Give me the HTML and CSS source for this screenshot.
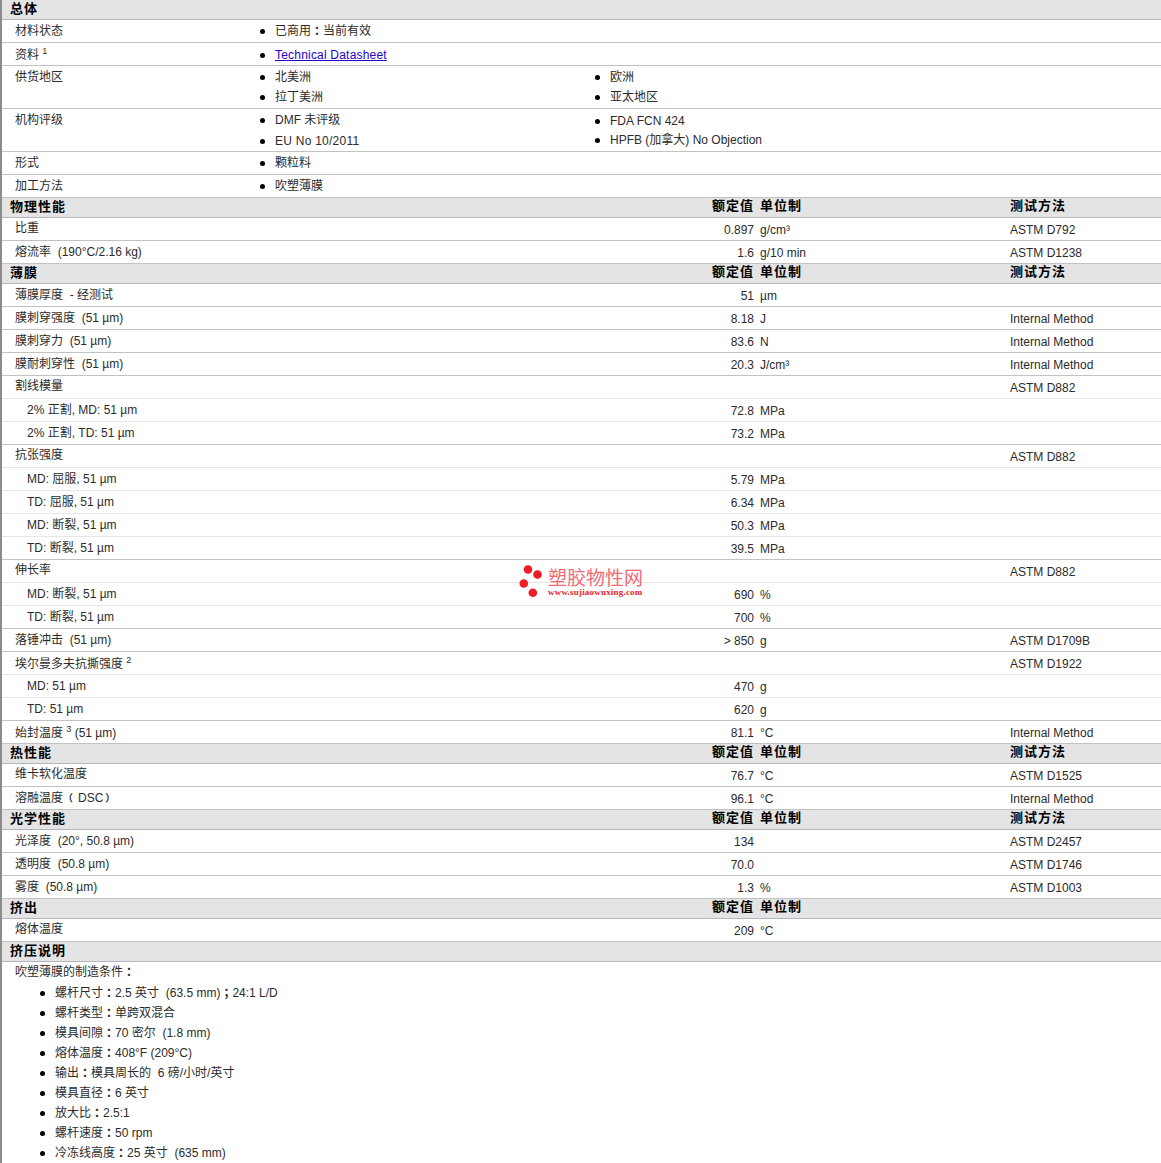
FILE: index.html
```html
<!DOCTYPE html>
<html lang="zh">
<head>
<meta charset="utf-8">
<title>塑胶物性表</title>
<link rel="stylesheet" href="styles.css">
</head>
<body>
<main class="sheet">
  <div class="head"><b class="title">总体</b></div>
  <div class="gen"><div>材料状态</div><ul class="list"><li>已商用<span class="p">：</span>当前有效</li></ul></div>
  <div class="gen"><div class="low">资料 <sup>1</sup></div><ul class="list"><li class="low"><a href="#">Technical Datasheet</a></li></ul></div>
  <div class="gen"><div>供货地区</div><ul class="list"><li>北美洲</li><li>拉丁美洲</li></ul><ul class="list"><li>欧洲</li><li>亚太地区</li></ul></div>
  <div class="gen"><div>机构评级</div><ul class="list"><li>DMF 未评级</li><li class="low wide">EU No 10/2011</li></ul><ul class="list"><li class="low">FDA FCN 424</li><li>HPFB (加拿大) No Objection</li></ul></div>
  <div class="gen"><div>形式</div><ul class="list"><li>颗粒料</li></ul></div>
  <div class="gen"><div>加工方法</div><ul class="list"><li>吹塑薄膜</li></ul></div>

  <div class="head cols"><b class="title">物理性能</b><b class="val">额定值</b><b class="unit">单位制</b><b>测试方法</b></div>
  <div class="row"><div class="cj">比重</div><div class="val">0.897</div><div class="unit">g/cm³</div><div>ASTM D792</div></div>
  <div class="row"><div>熔流率&nbsp;&nbsp;(190°C/2.16 kg)</div><div class="val">1.6</div><div class="unit">g/10 min</div><div>ASTM D1238</div></div>

  <div class="head cols"><b class="title">薄膜</b><b class="val">额定值</b><b class="unit">单位制</b><b>测试方法</b></div>
  <div class="row"><div>薄膜厚度&nbsp;&nbsp;- 经测试</div><div class="val">51</div><div class="unit">µm</div><div></div></div>
  <div class="row"><div>膜刺穿强度&nbsp;&nbsp;(51 µm)</div><div class="val">8.18</div><div class="unit">J</div><div>Internal Method</div></div>
  <div class="row"><div>膜刺穿力&nbsp;&nbsp;(51 µm)</div><div class="val">83.6</div><div class="unit">N</div><div>Internal Method</div></div>
  <div class="row"><div>膜耐刺穿性&nbsp;&nbsp;(51 µm)</div><div class="val">20.3</div><div class="unit">J/cm³</div><div>Internal Method</div></div>
  <div class="row soft"><div class="cj">割线模量</div><div class="val"></div><div class="unit"></div><div>ASTM D882</div></div>
  <div class="row soft"><div class="sub">2% 正割, MD: 51 µm</div><div class="val">72.8</div><div class="unit">MPa</div><div></div></div>
  <div class="row"><div class="sub">2% 正割, TD: 51 µm</div><div class="val">73.2</div><div class="unit">MPa</div><div></div></div>
  <div class="row soft"><div class="cj">抗张强度</div><div class="val"></div><div class="unit"></div><div>ASTM D882</div></div>
  <div class="row soft"><div class="sub">MD: 屈服, 51 µm</div><div class="val">5.79</div><div class="unit">MPa</div><div></div></div>
  <div class="row soft"><div class="sub">TD: 屈服, 51 µm</div><div class="val">6.34</div><div class="unit">MPa</div><div></div></div>
  <div class="row soft"><div class="sub">MD: 断裂, 51 µm</div><div class="val">50.3</div><div class="unit">MPa</div><div></div></div>
  <div class="row"><div class="sub">TD: 断裂, 51 µm</div><div class="val">39.5</div><div class="unit">MPa</div><div></div></div>
  <div class="row soft"><div class="cj">伸长率</div><div class="val"></div><div class="unit"></div><div>ASTM D882</div></div>
  <div class="row soft"><div class="sub">MD: 断裂, 51 µm</div><div class="val">690</div><div class="unit">%</div><div></div></div>
  <div class="row"><div class="sub">TD: 断裂, 51 µm</div><div class="val">700</div><div class="unit">%</div><div></div></div>
  <div class="row"><div>落锤冲击&nbsp;&nbsp;(51 µm)</div><div class="val">&gt; 850</div><div class="unit">g</div><div>ASTM D1709B</div></div>
  <div class="row soft"><div class="low">埃尔曼多夫抗撕强度 <sup>2</sup></div><div class="val"></div><div class="unit"></div><div>ASTM D1922</div></div>
  <div class="row soft"><div class="sub">MD: 51 µm</div><div class="val">470</div><div class="unit">g</div><div></div></div>
  <div class="row"><div class="sub">TD: 51 µm</div><div class="val">620</div><div class="unit">g</div><div></div></div>
  <div class="row"><div class="low">始封温度 <sup>3</sup> (51 µm)</div><div class="val">81.1</div><div class="unit">°C</div><div>Internal Method</div></div>

  <div class="head cols"><b class="title">热性能</b><b class="val">额定值</b><b class="unit">单位制</b><b>测试方法</b></div>
  <div class="row"><div class="cj">维卡软化温度</div><div class="val">76.7</div><div class="unit">°C</div><div>ASTM D1525</div></div>
  <div class="row"><div>溶融温度<span class="br open">（</span>DSC<span class="br close">）</span></div><div class="val">96.1</div><div class="unit">°C</div><div>Internal Method</div></div>

  <div class="head cols"><b class="title">光学性能</b><b class="val">额定值</b><b class="unit">单位制</b><b>测试方法</b></div>
  <div class="row"><div>光泽度&nbsp;&nbsp;(20°, 50.8 µm)</div><div class="val">134</div><div class="unit"></div><div>ASTM D2457</div></div>
  <div class="row"><div>透明度&nbsp;&nbsp;(50.8 µm)</div><div class="val">70.0</div><div class="unit"></div><div>ASTM D1746</div></div>
  <div class="row"><div>雾度&nbsp;&nbsp;(50.8 µm)</div><div class="val">1.3</div><div class="unit">%</div><div>ASTM D1003</div></div>

  <div class="head cols"><b class="title">挤出</b><b class="val">额定值</b><b class="unit">单位制</b><b></b></div>
  <div class="row"><div class="cj">熔体温度</div><div class="val">209</div><div class="unit">°C</div><div></div></div>

  <div class="head"><b class="title">挤压说明</b></div>
  <section class="notes">
    <p class="lead">吹塑薄膜的制造条件<span class="p">：</span></p>
    <ul class="list notelist">
      <li>螺杆尺寸<span class="p">：</span>2.5 英寸&nbsp;&nbsp;(63.5 mm)<span class="p">；</span>24:1 L/D</li>
      <li>螺杆类型<span class="p">：</span>单跨双混合</li>
      <li>模具间隙<span class="p">：</span>70 密尔&nbsp;&nbsp;(1.8 mm)</li>
      <li>熔体温度<span class="p">：</span>408°F (209°C)</li>
      <li>输出<span class="p">：</span>模具周长的&nbsp;&nbsp;6 磅/小时/英寸</li>
      <li>模具直径<span class="p">：</span>6 英寸</li>
      <li>放大比<span class="p">：</span>2.5:1</li>
      <li>螺杆速度<span class="p">：</span>50 rpm</li>
      <li>冷冻线高度<span class="p">：</span>25 英寸&nbsp;&nbsp;(635 mm)</li>
    </ul>
  </section>
</main>
<aside class="mark">
  <svg class="dots" width="28" height="36" viewBox="0 0 28 36" aria-hidden="true">
    <circle cx="9" cy="5.500" r="4.300"/><circle cx="18.500" cy="10.500" r="4.300"/><circle cx="4.800" cy="19.500" r="4.300"/><circle cx="13.800" cy="28.700" r="4.300"/>
  </svg>
  <div class="brand"><div class="cn">塑胶物性网</div><div class="url">www.sujiaowuxing.com</div></div>
</aside>
</body>
</html>
```
FILE: styles.css
```css
html, body { margin: 0; padding: 0; background: #fff; }
body {
  font: 12px/20px "Liberation Sans", "Noto Sans CJK SC", sans-serif;
  color: #2b2b2b;
  height: 1163px;
  overflow: hidden;
  position: relative;
}
.sheet { border-left: 2px solid #8c8c8c; }
.p {
  font-weight: 700;
  line-height: 0;
  display: inline-block;
  padding-left: 3px;
  letter-spacing: -3px;
}
.br { font-size: 10px; font-weight: 700; line-height: 0; }
.br.open { padding-right: 5px; }
.br.close { padding-left: 2px; }
.head {
  height: 19px;
  line-height: 18px;
  background: #e4e4e4;
  border-bottom: 1px solid #b4b4bc;
  color: #000;
}
.head b { font-size: 13px; letter-spacing: 1px; font-weight: 700; }
.cols b:not(.title) { line-height: 16px; }
.title { padding-left: 8px; }
.row, .cols {
  display: grid;
  grid-template-columns: 1fr 64px 250px 151px;
}
.row { height: 22px; line-height: 22px; border-bottom: 1px solid #c2c2c2; }
.row.soft { border-bottom-color: #e6e6e6; }
.row > div { line-height: 24px; }
.row > div:first-child { padding-left: 13px; line-height: 22px; }
.row > div.sub:first-child { padding-left: 25px; }
.row > div.cj:first-child { line-height: 20px; }
.val { text-align: right; padding-right: 6px; }
.gen {
  display: grid;
  grid-template-columns: 258px 335px 1fr;
  border-bottom: 1px solid #c2c2c2;
  padding: 1px 0;
}
.gen > div { padding-left: 13px; }
.list { list-style: none; margin: 0; padding: 0; }
.list li { box-sizing: border-box; height: 20px; padding-left: 15px; position: relative; }
.list li::before {
  content: "";
  position: absolute;
  left: 0;
  top: 8px;
  width: 5px;
  height: 5px;
  border-radius: 50%;
  background: #000;
}
.low { padding-top: 1px; }
.gen .low { margin-bottom: -1px; }
.gen .list li.low { margin-bottom: 0; }
.gen .list li.low::before { top: 9px; }
.wide { letter-spacing: .25px; }
a { color: #2200cc; letter-spacing: .2px; }
sup { font-size: 9px; line-height: 0; vertical-align: 5px; }
.lead { margin: 0 0 1px; padding: 0 0 0 13px; height: 20px; }
.notelist { padding-left: 38px; }
.mark {
  position: absolute;
  left: 519px;
  top: 564px;
  display: flex;
  gap: 1px;
  pointer-events: none;
}
.dots { fill: #ee1c25; }
.brand { width: 96px; }
.cn { color: #f26a76; font-size: 19px; line-height: 18px; margin-top: 6px; white-space: nowrap; }
.url { color: #e8212e; font: 700 9px/8px "Liberation Serif", serif; letter-spacing: .2px; white-space: nowrap; }
```
